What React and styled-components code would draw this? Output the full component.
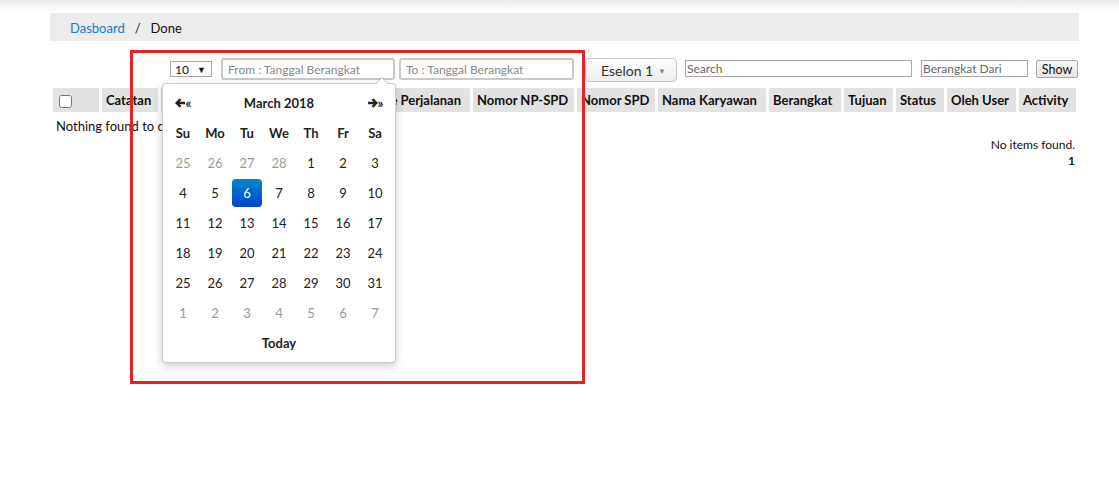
import React from "react";
import styled, { createGlobalStyle } from "styled-components";

const GlobalStyle = createGlobalStyle`
  * { box-sizing: border-box; }
  body {
    margin: 0;
    font-family: Lato, "Open Sans", sans-serif;
    font-size: 13px;
    color: #111;
    background: #fff;
  }
`;

const Page = styled.div`
  position: relative;
  width: 1119px;
  min-height: 503px;
`;

const TopShade = styled.div`
  height: 13px;
  background: linear-gradient(#ebebeb, #f7f7f7 50%, #fff);
`;

const Content = styled.div`
  padding: 0 40px 0 50px;
`;

const Breadcrumb = styled.nav`
  height: 28px;
  background: #ececec;
  display: flex;
  align-items: center;
  padding: 2px 0 0 20px;
  font-size: 13px;
`;

const Crumb = styled.a`
  color: ${(p) => (p.$active ? "#111" : "#1a7ad0")};
  text-decoration: none;
`;

const Sep = styled.span`
  padding: 0 10px;
  color: #222;
`;

const Toolbar = styled.div`
  margin-top: 17px;
  height: 24px;
  display: flex;
  align-items: flex-start;
  padding-left: 120px;
`;

const PageSize = styled.div`
  width: 42px;
  height: 16px;
  border: 1px solid #a9a9a9;
  display: flex;
  align-items: center;
  justify-content: space-between;
  padding: 0 5px 0 4px;
  font-size: 12px;
  margin: 3px 9px 0 0;
`;

const Tri = styled.span`
  font-size: 9px;
`;

const DateInput = styled.input`
  width: ${(p) => p.$w}px;
  height: 22px;
  border: 2px solid #c9c9c9;
  border-radius: 3px;
  padding: 0 5px;
  font-family: inherit;
  font-size: 12px;
  margin: 0 ${(p) => p.$mr}px 0 0;
  outline: none;
  &::placeholder { color: #888; }
`;

const SelectButton = styled.div`
  width: 92px;
  height: 24px;
  border: 1px solid #c4c4c4;
  border-radius: 4px;
  background: linear-gradient(#fff, #ececec);
  display: flex;
  align-items: center;
  justify-content: space-between;
  padding: 1px 10px 0 15px;
  font-size: 14px;
  color: #333;
  margin-right: 8px;
`;

const Caret = styled.span`
  font-size: 8px;
  color: #888;
`;

const PlainInput = styled.input`
  width: ${(p) => p.$w}px;
  height: 17px;
  border: 1px solid #a9a9a9;
  padding: 0 1px;
  font-family: inherit;
  font-size: 12px;
  margin: 2px ${(p) => p.$mr}px 0 0;
  outline: none;
  &::placeholder { color: #666; }
`;

const ShowButton = styled.button`
  width: 42px;
  height: 18px;
  border: 1px solid #aaa;
  border-radius: 2px;
  background: linear-gradient(#f7f7f7, #e6e6e6);
  font-family: inherit;
  font-size: 12.5px;
  color: #111;
  padding: 0;
  margin-top: 2px;
`;

const Table = styled.table`
  margin-top: 3px;
  border-collapse: separate;
  border-spacing: 3px 3px;
  table-layout: fixed;
  width: 1029px;
`;

const Th = styled.th`
  width: ${(p) => p.$w}px;
  height: 24px;
  padding: 0 ${(p) => p.$pad ?? 4}px;
  background: #e2e2e2;
  text-align: left;
  font-weight: 700;
  font-size: 13px;
  white-space: nowrap;
  overflow: hidden;
  color: #111;
`;

const CheckTh = styled(Th)`
  padding-left: 6px;
  input { margin: 0; width: 13px; height: 13px; vertical-align: middle; }
`;

const EmptyCell = styled.td`
  padding: 3px 0 0 3px;
  font-size: 13px;
  height: 18px;
  vertical-align: top;
`;

const Pager = styled.div`
  margin-top: 0;
  padding-right: 4px;
  text-align: right;
  font-size: 12px;
  line-height: 16px;
`;

const PageNum = styled.div`
  font-weight: 700;
`;

const Picker = styled.div`
  position: absolute;
  left: 162px;
  top: 83px;
  width: 234px;
  padding: 4px;
  background: #fff;
  border: 1px solid rgba(0, 0, 0, 0.2);
  border-radius: 4px;
  box-shadow: 0 3px 8px rgba(0, 0, 0, 0.2);
  &::before {
    content: "";
    position: absolute;
    top: -7px;
    right: 6px;
    border-left: 7px solid transparent;
    border-right: 7px solid transparent;
    border-bottom: 7px solid rgba(0, 0, 0, 0.2);
  }
  &::after {
    content: "";
    position: absolute;
    top: -6px;
    right: 7px;
    border-left: 6px solid transparent;
    border-right: 6px solid transparent;
    border-bottom: 6px solid #fff;
  }
`;

const CalTable = styled.table`
  border-collapse: collapse;
  width: 224px;
  table-layout: fixed;
`;

const CalTh = styled.th`
  height: 30px;
  padding: 0;
  text-align: center;
  font-weight: 700;
  font-size: 13px;
  color: #222;
`;

const Nav = styled.span`
  display: inline-flex;
  align-items: center;
  font-weight: 700;
  font-size: 13px;
  color: #222;
`;

const CalTd = styled.td`
  height: 30px;
  padding: 0;
  text-align: center;
  font-size: 13px;
  color: ${(p) => (p.$muted ? "#999" : "#222")};
`;

const Day = styled.span`
  display: inline-block;
  width: 30px;
  height: 28px;
  line-height: 28px;
  border-radius: 4px;
  ${(p) =>
    p.$active &&
    `
    background: linear-gradient(#0088cc, #0044cc);
    color: #fff;
  `}
`;

const Highlight = styled.div`
  position: absolute;
  left: 130px;
  top: 50px;
  width: 455px;
  height: 334px;
  border: 3px solid #e8202a;
  pointer-events: none;
`;

const ArrowLeft = () => (
  <svg width="11" height="10" viewBox="0 0 11 10">
    <path d="M10 5H2M5.5 1.2L1.6 5l3.9 3.8" stroke="#222" strokeWidth="2.4" fill="none" />
  </svg>
);
const ArrowRight = () => (
  <svg width="11" height="10" viewBox="0 0 11 10">
    <path d="M1 5h8M5.5 1.2L9.4 5 5.5 8.8" stroke="#222" strokeWidth="2.4" fill="none" />
  </svg>
);

const columns = [
  { t: "Catatan", w: 56 },
  { t: "Tanggal Berangkat", w: 205 },
  { t: "Tipe Perjalanan", w: 101, pad: 3 },
  { t: "Nomor NP-SPD", w: 101 },
  { t: "Nomor SPD", w: 78 },
  { t: "Nama Karyawan", w: 108 },
  { t: "Berangkat", w: 72 },
  { t: "Tujuan", w: 49 },
  { t: "Status", w: 48 },
  { t: "Oleh User", w: 69 },
  { t: "Activity", w: 57 },
];

const weeks = [
  [[25, 1], [26, 1], [27, 1], [28, 1], [1], [2], [3]],
  [[4], [5], [6, 0, 1], [7], [8], [9], [10]],
  [[11], [12], [13], [14], [15], [16], [17]],
  [[18], [19], [20], [21], [22], [23], [24]],
  [[25], [26], [27], [28], [29], [30], [31]],
  [[1, 1], [2, 1], [3, 1], [4, 1], [5, 1], [6, 1], [7, 1]],
];

export default function App() {
  return (
    <Page>
      <GlobalStyle />
      <TopShade />
      <Content>
        <Breadcrumb>
          <Crumb href="#">Dasboard</Crumb>
          <Sep>/</Sep>
          <Crumb $active>Done</Crumb>
        </Breadcrumb>
        <Toolbar>
          <PageSize>
            <span>10</span>
            <Tri>▼</Tri>
          </PageSize>
          <DateInput $w={174} $mr={4} placeholder="From : Tanggal Berangkat" />
          <DateInput $w={175} $mr={11} placeholder="To : Tanggal Berangkat" />
          <SelectButton>
            <span>Eselon 1</span>
            <Caret>▼</Caret>
          </SelectButton>
          <PlainInput $w={227} $mr={9} placeholder="Search" />
          <PlainInput $w={107} $mr={8} placeholder="Berangkat Dari" />
          <ShowButton>Show</ShowButton>
        </Toolbar>
        <Table>
          <thead>
            <tr>
              <CheckTh $w={46}>
                <input type="checkbox" />
              </CheckTh>
              {columns.map((c) => (
                <Th key={c.t} $w={c.w} $pad={c.pad}>
                  {c.t}
                </Th>
              ))}
            </tr>
          </thead>
          <tbody>
            <tr>
              <EmptyCell colSpan={12}>Nothing found to display.</EmptyCell>
            </tr>
          </tbody>
        </Table>
        <Pager>
          <div>No items found.</div>
          <PageNum>1</PageNum>
        </Pager>
      </Content>

      <Picker>
        <CalTable>
          <thead>
            <tr>
              <CalTh>
                <Nav>
                  <ArrowLeft />«
                </Nav>
              </CalTh>
              <CalTh colSpan={5}>March 2018</CalTh>
              <CalTh>
                <Nav>
                  <ArrowRight />»
                </Nav>
              </CalTh>
            </tr>
            <tr>
              {["Su", "Mo", "Tu", "We", "Th", "Fr", "Sa"].map((d) => (
                <CalTh key={d}>{d}</CalTh>
              ))}
            </tr>
          </thead>
          <tbody>
            {weeks.map((w, i) => (
              <tr key={i}>
                {w.map(([n, muted, active], j) => (
                  <CalTd key={j} $muted={!!muted}>
                    <Day $active={!!active}>{n}</Day>
                  </CalTd>
                ))}
              </tr>
            ))}
          </tbody>
          <tfoot>
            <tr>
              <CalTh colSpan={7}>Today</CalTh>
            </tr>
          </tfoot>
        </CalTable>
      </Picker>

      <Highlight />
    </Page>
  );
}
